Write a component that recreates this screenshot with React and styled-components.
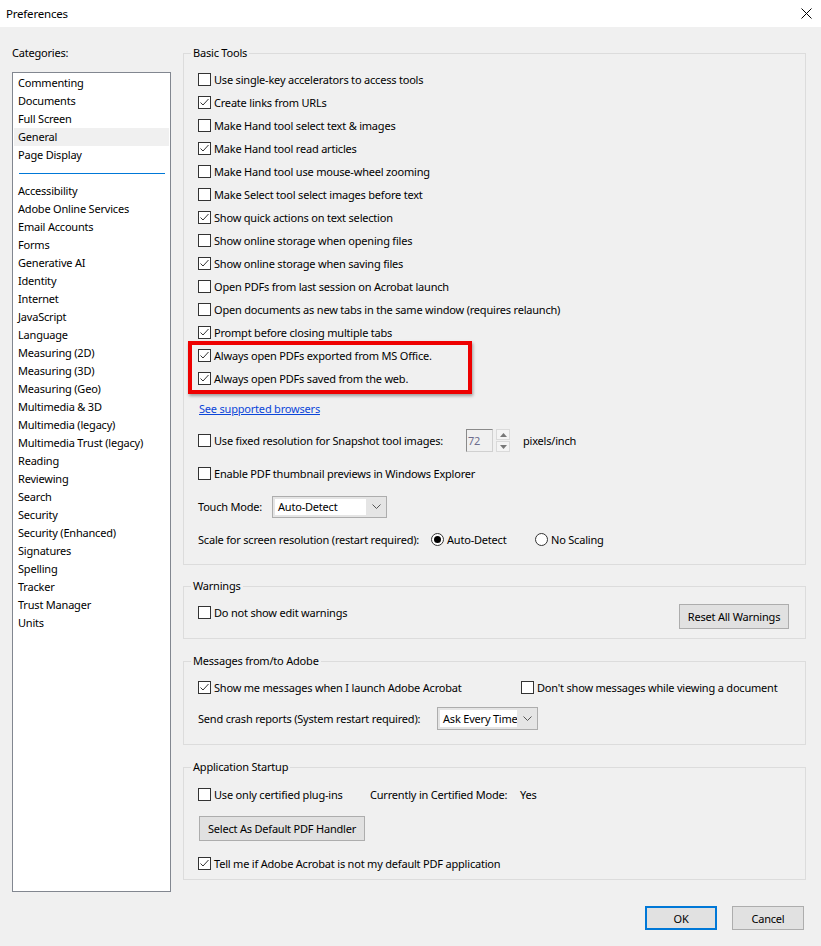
import React from "react";
import styled, { createGlobalStyle } from "styled-components";

const Global = createGlobalStyle`
  html, body { margin: 0; padding: 0; background: #f0f0f0; }
  body { font-family: "Noto Sans", "Open Sans", sans-serif; font-size: 11px; letter-spacing: -0.2px; color: #000; }
  * { box-sizing: border-box; }
`;

const Window = styled.div`
  width: 821px;
  height: 946px;
  display: flex;
  flex-direction: column;
  background: #f0f0f0;
  overflow: hidden;
`;

const TitleBar = styled.div`
  height: 27px;
  background: #fff;
  display: flex;
  align-items: center;
  justify-content: space-between;
  padding: 0 9px 0 6px;
  font-size: 11.5px;
`;

const CloseIcon = styled.svg`
  width: 11px;
  height: 11px;
`;

const Main = styled.div`
  display: flex;
  gap: 12px;
  padding: 18px 15px 0 12px;
  height: 865px;
`;

const LeftCol = styled.div`
  width: 159px;
  display: flex;
  flex-direction: column;
`;

const CatLabel = styled.div`
  height: 16px;
  line-height: 16px;
  margin-bottom: 11px;
`;

const ListBox = styled.div`
  height: 820px;
  background: #fff;
  border: 1px solid #828790;
  padding: 1px 1px;
`;

const ListItem = styled.div`
  height: 18px;
  line-height: 18px;
  padding-left: 4px;
  background: ${(p) => (p.$selected ? "#f0f0f0" : "transparent")};
`;

const ListSep = styled.div`
  height: 18px;
  display: flex;
  align-items: center;
  padding: 0 4px 0 5px;
  &::after {
    content: "";
    flex: 1;
    height: 1px;
    background: #0078d7;
  }
`;

const RightCol = styled.div`
  width: 623px;
  display: flex;
  flex-direction: column;
`;

const Group = styled.fieldset`
  margin: 0 0 ${(p) => p.$mb || 0}px 0;
  border: 1px solid #dcdcdc;
  padding: ${(p) => p.$pt}px 16px ${(p) => p.$pb}px 14px;
  min-width: 0;
`;

const Legend = styled.legend`
  margin-left: -7px;
  padding: 0 2px;
  height: 16px;
  line-height: 16px;
  font-size: 11px;
`;

const Row = styled.div`
  height: ${(p) => p.$h || 23}px;
  margin-top: ${(p) => p.$mt || 0}px;
  display: flex;
  align-items: center;
`;

const GridRow = styled.div`
  height: ${(p) => p.$h || 23}px;
  margin-top: ${(p) => p.$mt || 0}px;
  display: grid;
  grid-template-columns: ${(p) => p.$cols};
  align-items: center;
`;

const Check = styled.label`
  display: flex;
  align-items: center;
  gap: 3px;
  white-space: nowrap;
`;

const Box = styled.span`
  width: 13px;
  height: 13px;
  border: 1px solid #333;
  background: #fff;
  display: inline-flex;
  align-items: center;
  justify-content: center;
  flex: none;
`;

const CheckBox = ({ checked, children }) => (
  <Check>
    <Box>
      {checked && (
        <svg width="11" height="11" viewBox="0 0 11 11">
          <polyline points="1.5,5.5 4,8 9.5,2" fill="none" stroke="#333" strokeWidth="1" />
        </svg>
      )}
    </Box>
    <span>{children}</span>
  </Check>
);

const RadioCircle = styled.span`
  width: 13px;
  height: 13px;
  border: 1px solid #333;
  border-radius: 50%;
  background: #fff;
  display: inline-flex;
  align-items: center;
  justify-content: center;
  flex: none;
  &::after {
    content: "";
    width: 7px;
    height: 7px;
    border-radius: 50%;
    background: ${(p) => (p.$on ? "#000" : "transparent")};
  }
`;

const Radio = ({ on, children }) => (
  <Check>
    <RadioCircle $on={on} />
    <span>{children}</span>
  </Check>
);

const Highlight = styled.div`
  position: relative;
  &::before {
    content: "";
    position: absolute;
    left: -10px;
    top: -3.5px;
    width: 276px;
    bottom: -3.5px;
    border: 4px solid #ee0000;
    box-shadow: 1px 2px 3px rgba(0, 0, 0, 0.35);
    pointer-events: none;
  }
`;

const Link = styled.a`
  color: #0b46d9;
  text-decoration: underline;
  margin-left: 1px;
  cursor: pointer;
`;

const SpinWrap = styled.div`
  display: flex;
  align-items: center;
  gap: 3px;
`;

const SpinInput = styled.div`
  width: 27px;
  height: 23px;
  border: 1px solid #d0d0d0;
  border-top-color: #8a8a8a;
  border-left-color: #8a8a8a;
  background: #f0f0f0;
  color: #6d6d8d;
  padding-left: 1px;
  line-height: 21px;
`;

const SpinButtons = styled.div`
  width: 14px;
  height: 23px;
  display: flex;
  flex-direction: column;
  gap: 1px;
`;

const SpinBtn = styled.div`
  flex: 1;
  border: 1px solid #dadada;
  background: #f4f4f4;
  display: flex;
  align-items: center;
  justify-content: center;
`;

const Unit = styled.span`
  margin-left: 10px;
`;

const Select = styled.div`
  width: ${(p) => p.$w}px;
  height: ${(p) => p.$h || 22}px;
  border: 1px solid #adadad;
  background: #e5e5e5;
  display: flex;
  align-items: stretch;
  padding: 2px 0 2px 2px;
`;

const SelectValue = styled.div`
  flex: 1;
  background: #fff;
  padding-left: 3px;
  display: flex;
  align-items: center;
  white-space: nowrap;
  overflow: hidden;
`;

const SelectArrow = styled.div`
  width: 20px;
  flex: none;
  display: flex;
  align-items: center;
  justify-content: center;
`;

const Chevron = () => (
  <svg width="9" height="6" viewBox="0 0 9 6">
    <polyline points="0.5,0.5 4.5,4.5 8.5,0.5" fill="none" stroke="#555" strokeWidth="1" />
  </svg>
);

const Button = styled.button`
  font: inherit;
  letter-spacing: inherit;
  color: #000;
  width: ${(p) => p.$w}px;
  height: ${(p) => p.$h || 25}px;
  margin-top: ${(p) => p.$mt || 0}px;
  margin-left: ${(p) => p.$ml || 0}px;
  background: #e1e1e1;
  border: ${(p) => (p.$primary ? "2px solid #0078d7" : "1px solid #adadad")};
  padding: 0;
  flex: none;
`;

const SpaceRow = styled.div`
  display: flex;
  justify-content: space-between;
  align-items: flex-start;
`;

const Footer = styled.div`
  display: flex;
  justify-content: flex-end;
  gap: 15px;
  padding: 14px 17px 0 0;
`;

const categoriesTop = ["Commenting", "Documents", "Full Screen", "General", "Page Display"];
const categoriesBottom = [
  "Accessibility", "Adobe Online Services", "Email Accounts", "Forms", "Generative AI",
  "Identity", "Internet", "JavaScript", "Language", "Measuring (2D)", "Measuring (3D)",
  "Measuring (Geo)", "Multimedia & 3D", "Multimedia (legacy)", "Multimedia Trust (legacy)",
  "Reading", "Reviewing", "Search", "Security", "Security (Enhanced)", "Signatures",
  "Spelling", "Tracker", "Trust Manager", "Units",
];

const basicChecks = [
  ["Use single-key accelerators to access tools", false],
  ["Create links from URLs", true],
  ["Make Hand tool select text & images", false],
  ["Make Hand tool read articles", true],
  ["Make Hand tool use mouse-wheel zooming", false],
  ["Make Select tool select images before text", false],
  ["Show quick actions on text selection", true],
  ["Show online storage when opening files", false],
  ["Show online storage when saving files", true],
  ["Open PDFs from last session on Acrobat launch", false],
  ["Open documents as new tabs in the same window (requires relaunch)", false],
  ["Prompt before closing multiple tabs", true],
];

export default function App() {
  return (
    <Window>
      <Global />
      <TitleBar>
        <span>Preferences</span>
        <CloseIcon viewBox="0 0 11 11">
          <line x1="0.5" y1="0.5" x2="10.5" y2="10.5" stroke="#000" strokeWidth="1" />
          <line x1="10.5" y1="0.5" x2="0.5" y2="10.5" stroke="#000" strokeWidth="1" />
        </CloseIcon>
      </TitleBar>
      <Main>
        <LeftCol>
          <CatLabel>Categories:</CatLabel>
          <ListBox>
            {categoriesTop.map((c) => (
              <ListItem key={c} $selected={c === "General"}>{c}</ListItem>
            ))}
            <ListSep />
            {categoriesBottom.map((c) => (
              <ListItem key={c}>{c}</ListItem>
            ))}
          </ListBox>
        </LeftCol>
        <RightCol>
          <Group $pt={7} $pb={8} $mb={13}>
            <Legend>Basic Tools</Legend>
            {basicChecks.map(([t, c]) => (
              <Row key={t}>
                <CheckBox checked={c}>{t}</CheckBox>
              </Row>
            ))}
            <Highlight>
              <Row>
                <CheckBox checked>Always open PDFs exported from MS Office.</CheckBox>
              </Row>
              <Row>
                <CheckBox checked>Always open PDFs saved from the web.</CheckBox>
              </Row>
            </Highlight>
            <Row $mt={7}>
              <Link>See supported browsers</Link>
            </Row>
            <GridRow $h={33} $mt={4} $cols="268px auto">
              <CheckBox>Use fixed resolution for Snapshot tool images:</CheckBox>
              <SpinWrap>
                <SpinInput>72</SpinInput>
                <SpinButtons>
                  <SpinBtn>
                    <svg width="7" height="4" viewBox="0 0 7 4"><polygon points="0,4 3.5,0 7,4" fill="#777" /></svg>
                  </SpinBtn>
                  <SpinBtn>
                    <svg width="7" height="4" viewBox="0 0 7 4"><polygon points="0,0 3.5,4 7,0" fill="#777" /></svg>
                  </SpinBtn>
                </SpinButtons>
                <Unit>pixels/inch</Unit>
              </SpinWrap>
            </GridRow>
            <Row $h={33}>
              <CheckBox>Enable PDF thumbnail previews in Windows Explorer</CheckBox>
            </Row>
            <GridRow $h={33} $cols="74px auto">
              <span>Touch Mode:</span>
              <Select $w={115}>
                <SelectValue>Auto-Detect</SelectValue>
                <SelectArrow><Chevron /></SelectArrow>
              </Select>
            </GridRow>
            <GridRow $h={33} $cols="233px 104px auto">
              <span>Scale for screen resolution (restart required):</span>
              <Radio on>Auto-Detect</Radio>
              <Radio>No Scaling</Radio>
            </GridRow>
          </Group>

          <Group $pt={7} $pb={9} $mb={14}>
            <Legend>Warnings</Legend>
            <SpaceRow>
              <Row>
                <CheckBox>Do not show edit warnings</CheckBox>
              </Row>
              <Button $w={110} $mt={3}>Reset All Warnings</Button>
            </SpaceRow>
          </Group>

          <Group $pt={7} $pb={14} $mb={14}>
            <Legend>Messages from/to Adobe</Legend>
            <GridRow $cols="323px auto">
              <CheckBox checked>Show me messages when I launch Adobe Acrobat</CheckBox>
              <CheckBox>Don't show messages while viewing a document</CheckBox>
            </GridRow>
            <GridRow $mt={8} $cols="239px auto">
              <span>Send crash reports (System restart required):</span>
              <Select $w={101} $h={23}>
                <SelectValue>Ask Every Time</SelectValue>
                <SelectArrow><Chevron /></SelectArrow>
              </Select>
            </GridRow>
          </Group>

          <Group $pt={8} $pb={4}>
            <Legend>Application Startup</Legend>
            <GridRow $cols="172px 150px auto">
              <CheckBox>Use only certified plug-ins</CheckBox>
              <span>Currently in Certified Mode:</span>
              <span>Yes</span>
            </GridRow>
            <Row $h={25} $mt={10}>
              <Button $w={166} $ml={1}>Select As Default PDF Handler</Button>
            </Row>
            <Row $mt={11}>
              <CheckBox checked>Tell me if Adobe Acrobat is not my default PDF application</CheckBox>
            </Row>
          </Group>
        </RightCol>
      </Main>
      <Footer>
        <Button $w={72} $h={24} $primary>OK</Button>
        <Button $w={72} $h={24}>Cancel</Button>
      </Footer>
    </Window>
  );
}
